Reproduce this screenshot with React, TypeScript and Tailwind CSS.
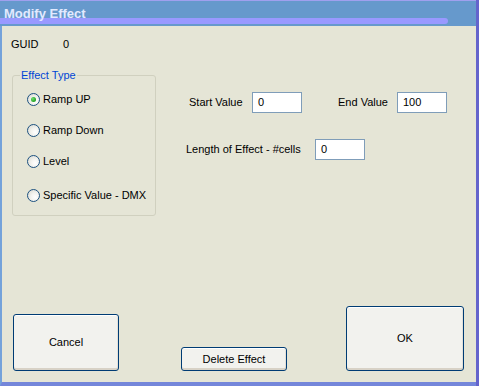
import React from 'react';

function Radio({ label, checked, className }: { label: string; checked?: boolean; className?: string }) {
  return (
    <div className={`flex items-center h-[13px] ${className ?? ''}`}>
      <span className="w-[13px] h-[13px] rounded-full border border-[#1c5180] bg-[radial-gradient(circle_at_65%_65%,#ffffff_0%,#f3f3ef_40%,#d4d4cc_100%)] flex items-center justify-center">
        {checked && (
          <span className="w-[5px] h-[5px] rounded-full bg-[radial-gradient(circle_at_35%_35%,#6fde6f_0%,#21a121_70%,#1a8a1a_100%)]" />
        )}
      </span>
      <span className="ml-[3px] leading-[13px]">{label}</span>
    </div>
  );
}

function Field({ value, className }: { value: string; className?: string }) {
  return (
    <div className={`w-[50px] h-[21px] bg-white border border-[#7f9db9] flex items-center pl-[5px] ${className ?? ''}`}>
      {value}
    </div>
  );
}

function XpButton({ label, className }: { label: string; className?: string }) {
  return (
    <button className={`rounded-[3px] border border-[#003c74] bg-[#f2f2ee] shadow-[inset_0_-2px_0_#d8d2c6,inset_0_1px_0_#ffffff,inset_-1px_0_0_#e3e0d8] flex items-center justify-center text-black ${className ?? ''}`}>
      {label}
    </button>
  );
}

export default function App() {
  return (
    <div className="w-[479px] h-[386px] flex flex-col border-r-[3px] border-[#6464cc] text-[11px] text-black font-['Liberation_Sans',Arial,sans-serif]">
      {/* Title bar */}
      <div className="relative h-[26px] bg-[#6699cc] border-t border-[#a0a0ee] shrink-0">
        <div className="absolute left-0 top-[17px] h-[6px] w-[448px] bg-[#9999ff] rounded-r-[3px]" />
        <div className="relative pl-[4px] pt-[5px] text-[13px] font-bold leading-[16px] text-[#e2eaff]">Modify Effect</div>
      </div>

      {/* Body */}
      <div className="flex-1 flex flex-col bg-[#e5e5d6] border-l-2 border-b-4 border-l-[#74a2da] border-b-[#7486da]">
        <div className="flex mt-[12px] ml-[9px] leading-[13px]">
          <span className="w-[52px]">GUID</span>
          <span>0</span>
        </div>

        <div className="flex mt-[18px]">
          <fieldset className="ml-[10px] w-[144px] h-[147px] border border-[#d0d0bf] rounded-[3px]">
            <legend className="ml-[7px] px-[1px] leading-[13px] text-[#0046d5]">Effect Type</legend>
            <div className="flex flex-col pl-[14px]">
              <Radio label="Ramp UP" checked className="mt-[11px]" />
              <Radio label="Ramp Down" className="mt-[18px]" />
              <Radio label="Level" className="mt-[18px]" />
              <Radio label="Specific Value - DMX" className="mt-[21px]" />
            </div>
          </fieldset>

          <div className="flex flex-col mt-[23px]">
            <div className="flex items-center ml-[33px]">
              <span className="w-[63px]">Start Value</span>
              <Field value="0" />
              <span className="ml-[36px] w-[59px]">End Value</span>
              <Field value="100" />
            </div>
            <div className="flex items-center ml-[30px] mt-[26px]">
              <span className="w-[129px]">Length of Effect - #cells</span>
              <Field value="0" />
            </div>
          </div>
        </div>

        <div className="flex-1" />

        <div className="flex items-end pb-[11px]">
          <XpButton label="Cancel" className="ml-[11px] w-[106px] h-[57px]" />
          <XpButton label="Delete Effect" className="ml-[62px] w-[106px] h-[24px]" />
          <XpButton label="OK" className="ml-[59px] w-[118px] h-[65px]" />
        </div>
      </div>
    </div>
  );
}
